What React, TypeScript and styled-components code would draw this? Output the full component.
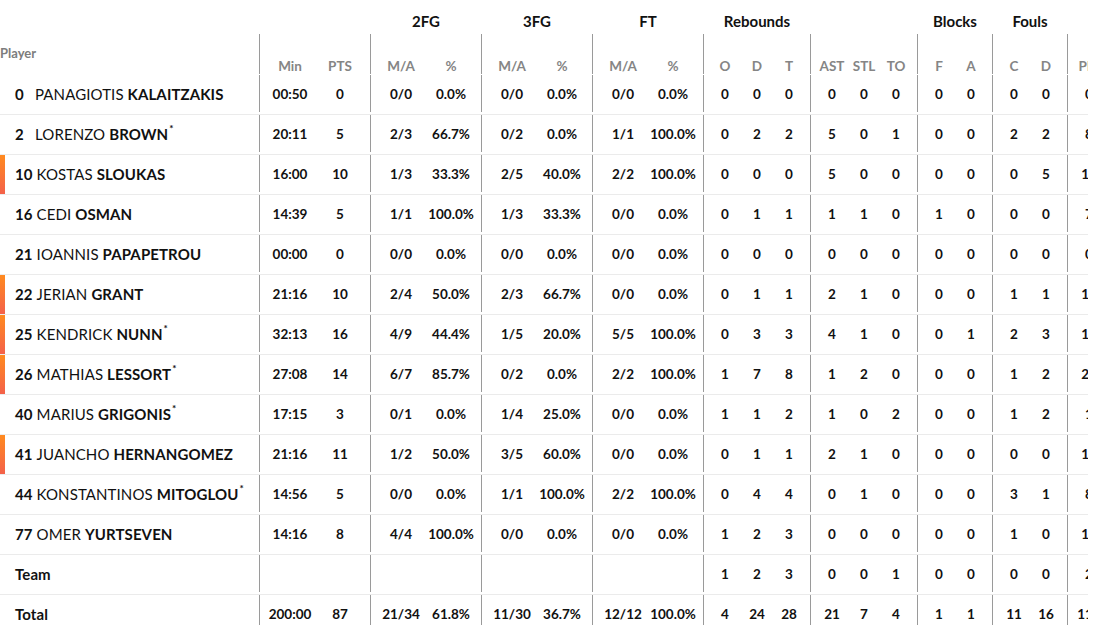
import React from "react";
import styled, { createGlobalStyle } from "styled-components";

const GlobalStyle = createGlobalStyle`
  html, body { margin: 0; padding: 0; background: #ffffff; }
  body { font-family: Lato, "Noto Sans", "Liberation Sans", sans-serif; color: #111; }
`;

const Board = styled.div`
  width: 1088px;
  overflow: hidden;
`;

const Inner = styled.div`
  width: 1120px;
`;

const TopRow = styled.div`
  display: flex;
  height: 34px;
`;

const SubRow = styled.div`
  display: flex;
  height: 40px;
`;

const Row = styled.div<{ $first?: boolean }>`
  display: flex;
  height: 40px;
  box-sizing: border-box;
  padding-bottom: 2px;
  border-top: 1px solid ${(p) => (p.$first ? "transparent" : "#ebebeb")};
`;

const PlayerCell = styled.div`
  width: 259px;
  flex: none;
  display: flex;
  align-items: center;
`;

const PlayerHead = styled.div`
  width: 259px;
  flex: none;
  padding-top: 12px;
  font-size: 13px;
  line-height: 14px;
  font-weight: 700;
  color: #7d7d7d;
`;

const Marker = styled.div<{ $on?: boolean }>`
  width: 5px;
  align-self: stretch;
  margin-bottom: -2px;
  flex: none;
  background: ${(p) =>
    p.$on ? "linear-gradient(180deg, #ff8a1f 0%, #f4614a 100%)" : "transparent"};
`;

const NameText = styled.div<{ $bold?: boolean }>`
  padding-left: 10px;
  font-size: 15px;
  white-space: nowrap;
  color: #111;
  font-weight: ${(p) => (p.$bold ? 700 : 400)};
  letter-spacing: 0.1px;
`;

const Num = styled.span`
  display: inline-block;
  min-width: 16px;
  margin-right: 4px;
  font-weight: 700;
`;

const Last = styled.span`
  font-weight: 700;
`;

const Star = styled.sup`
  font-size: 10px;
  font-weight: 700;
  vertical-align: top;
  position: relative;
  top: -3px;
  margin-left: 1px;
`;

const Group = styled.div<{ $line?: boolean }>`
  display: flex;
  flex: none;
  padding: 0 5px;
  border-left: 1px solid ${(p) => (p.$line ? "#9a9a9a" : "transparent")};
`;

const Cell = styled.div<{ $w: number }>`
  width: ${(p) => p.$w}px;
  flex: none;
  display: flex;
  align-items: center;
  justify-content: center;
  font-size: 13.5px;
  font-weight: 700;
  color: #111;
  white-space: nowrap;
`;

const SubCell = styled(Cell)`
  align-items: flex-end;
  padding-bottom: 1px;
  box-sizing: border-box;
  font-size: 13.5px;
  line-height: 14px;
  color: #858585;
`;

const GroupLabel = styled.div<{ $w: number }>`
  width: ${(p) => p.$w}px;
  flex: none;
  padding-top: 12px;
  box-sizing: border-box;
  text-align: center;
  font-size: 15px;
  line-height: 18px;
  font-weight: 700;
  color: #111;
`;

const W = 50;
const N = 32;

type Spec = { label: string; cols: { h: string; w: number }[] };

const groups: Spec[] = [
  { label: "", cols: [{ h: "Min", w: W }, { h: "PTS", w: W }] },
  { label: "2FG", cols: [{ h: "M/A", w: W }, { h: "%", w: W }] },
  { label: "3FG", cols: [{ h: "M/A", w: W }, { h: "%", w: W }] },
  { label: "FT", cols: [{ h: "M/A", w: W }, { h: "%", w: W }] },
  { label: "Rebounds", cols: [{ h: "O", w: N }, { h: "D", w: N }, { h: "T", w: N }] },
  { label: "", cols: [{ h: "AST", w: N }, { h: "STL", w: N }, { h: "TO", w: N }] },
  { label: "Blocks", cols: [{ h: "F", w: N }, { h: "A", w: N }] },
  { label: "Fouls", cols: [{ h: "C", w: N }, { h: "D", w: N }] },
  { label: "", cols: [{ h: "PIR", w: N }] },
];

type P = {
  no?: string;
  first?: string;
  last: string;
  star?: boolean;
  bar?: boolean;
  bold?: boolean;
  s: string[];
};

const players: P[] = [
  { no: "0", first: "PANAGIOTIS", last: "KALAITZAKIS", s: ["00:50", "0", "0/0", "0.0%", "0/0", "0.0%", "0/0", "0.0%", "0", "0", "0", "0", "0", "0", "0", "0", "0", "0", "0"] },
  { no: "2", first: "LORENZO", last: "BROWN", star: true, s: ["20:11", "5", "2/3", "66.7%", "0/2", "0.0%", "1/1", "100.0%", "0", "2", "2", "5", "0", "1", "0", "0", "2", "2", "8"] },
  { no: "10", first: "KOSTAS", last: "SLOUKAS", bar: true, s: ["16:00", "10", "1/3", "33.3%", "2/5", "40.0%", "2/2", "100.0%", "0", "0", "0", "5", "0", "0", "0", "0", "0", "5", "12"] },
  { no: "16", first: "CEDI", last: "OSMAN", s: ["14:39", "5", "1/1", "100.0%", "1/3", "33.3%", "0/0", "0.0%", "0", "1", "1", "1", "1", "0", "1", "0", "0", "0", "7"] },
  { no: "21", first: "IOANNIS", last: "PAPAPETROU", s: ["00:00", "0", "0/0", "0.0%", "0/0", "0.0%", "0/0", "0.0%", "0", "0", "0", "0", "0", "0", "0", "0", "0", "0", "0"] },
  { no: "22", first: "JERIAN", last: "GRANT", bar: true, s: ["21:16", "10", "2/4", "50.0%", "2/3", "66.7%", "0/0", "0.0%", "0", "1", "1", "2", "1", "0", "0", "0", "1", "1", "11"] },
  { no: "25", first: "KENDRICK", last: "NUNN", star: true, bar: true, s: ["32:13", "16", "4/9", "44.4%", "1/5", "20.0%", "5/5", "100.0%", "0", "3", "3", "4", "1", "0", "0", "1", "2", "3", "15"] },
  { no: "26", first: "MATHIAS", last: "LESSORT", star: true, bar: true, s: ["27:08", "14", "6/7", "85.7%", "0/2", "0.0%", "2/2", "100.0%", "1", "7", "8", "1", "2", "0", "0", "0", "1", "2", "22"] },
  { no: "40", first: "MARIUS", last: "GRIGONIS", star: true, s: ["17:15", "3", "0/1", "0.0%", "1/4", "25.0%", "0/0", "0.0%", "1", "1", "2", "1", "0", "2", "0", "0", "1", "2", "1"] },
  { no: "41", first: "JUANCHO", last: "HERNANGOMEZ", bar: true, s: ["21:16", "11", "1/2", "50.0%", "3/5", "60.0%", "0/0", "0.0%", "0", "1", "1", "2", "1", "0", "0", "0", "0", "0", "12"] },
  { no: "44", first: "KONSTANTINOS", last: "MITOGLOU", star: true, s: ["14:56", "5", "0/0", "0.0%", "1/1", "100.0%", "2/2", "100.0%", "0", "4", "4", "0", "1", "0", "0", "0", "3", "1", "8"] },
  { no: "77", first: "OMER", last: "YURTSEVEN", s: ["14:16", "8", "4/4", "100.0%", "0/0", "0.0%", "0/0", "0.0%", "1", "2", "3", "0", "0", "0", "0", "0", "1", "0", "10"] },
  { last: "Team", bold: true, s: ["", "", "", "", "", "", "", "", "1", "2", "3", "0", "0", "1", "0", "0", "0", "0", "2"] },
  { last: "Total", bold: true, s: ["200:00", "87", "21/34", "61.8%", "11/30", "36.7%", "12/12", "100.0%", "4", "24", "28", "21", "7", "4", "1", "1", "11", "16", "113"] },
];

function StatGroups({ values }: { values: string[] }) {
  let i = 0;
  return (
    <>
      {groups.map((g, gi) => (
        <Group key={gi} $line>
          {g.cols.map((c, ci) => {
            const v = values[i++];
            return (
              <Cell key={ci} $w={c.w}>
                {v}
              </Cell>
            );
          })}
        </Group>
      ))}
    </>
  );
}

export default function App() {
  return (
    <Board>
      <GlobalStyle />
      <Inner>
        <TopRow>
          <PlayerCell />
          {groups.map((g, gi) => (
            <Group key={gi}>
              <GroupLabel $w={g.cols.reduce((a, c) => a + c.w, 0)}>{g.label}</GroupLabel>
            </Group>
          ))}
        </TopRow>
        <SubRow>
          <PlayerHead>Player</PlayerHead>
          {groups.map((g, gi) => (
            <Group key={gi} $line>
              {g.cols.map((c, ci) => (
                <SubCell key={ci} $w={c.w}>
                  {c.h}
                </SubCell>
              ))}
            </Group>
          ))}
        </SubRow>
        {players.map((p, pi) => (
          <Row key={pi} $first={pi === 0}>
            <PlayerCell>
              <Marker $on={p.bar} />
              {p.bold ? (
                <NameText $bold>{p.last}</NameText>
              ) : (
                <NameText>
                  <Num>{p.no}</Num>
                  {p.first} <Last>{p.last}</Last>
                  {p.star && <Star>*</Star>}
                </NameText>
              )}
            </PlayerCell>
            <StatGroups values={p.s} />
          </Row>
        ))}
      </Inner>
    </Board>
  );
}
